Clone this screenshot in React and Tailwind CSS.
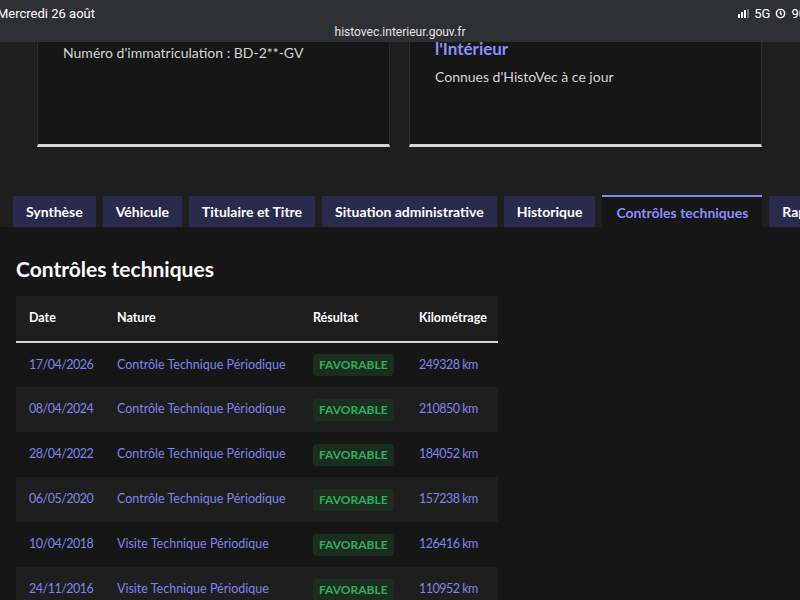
const tabs = ['Synthèse', 'Véhicule', 'Titulaire et Titre', 'Situation administrative', 'Historique', 'Contrôles techniques', 'Rapport']

const rows = [
  { date: '17/04/2026', nature: 'Contrôle Technique Périodique', km: '249328 km' },
  { date: '08/04/2024', nature: 'Contrôle Technique Périodique', km: '210850 km' },
  { date: '28/04/2022', nature: 'Contrôle Technique Périodique', km: '184052 km' },
  { date: '06/05/2020', nature: 'Contrôle Technique Périodique', km: '157238 km' },
  { date: '10/04/2018', nature: 'Visite Technique Périodique', km: '126416 km' },
  { date: '24/11/2016', nature: 'Visite Technique Périodique', km: '110952 km' },
]

function StatusBar() {
  return (
    <div className="h-[42px] bg-[#2f3033] relative shrink-0" style={{ fontFamily: 'Roboto, "Liberation Sans", sans-serif' }}>
      <div className="absolute left-[-3px] top-[4px] text-[13px] text-white">Mercredi 26 août</div>
      <div className="absolute right-[-6px] top-[4px] flex items-center gap-[5px] text-[13px] text-white">
        <div className="flex items-end gap-[1px] h-[9px]">
          <span className="w-[2px] h-[4px] bg-white" />
          <span className="w-[2px] h-[6px] bg-white" />
          <span className="w-[2px] h-[8px] bg-white" />
          <span className="w-[2px] h-[9px] bg-[#777]" />
        </div>
        <span>5G</span>
        <svg width="11" height="11" viewBox="0 0 12 12" fill="none" stroke="white" strokeWidth="1.6">
          <circle cx="6" cy="6" r="4.5" />
          <path d="M6 3.5v2.7l1.5 1" />
        </svg>
        <span>90</span>
      </div>
      <div className="absolute inset-x-0 top-[23px] text-center text-[12px] text-[#e4e4e4]">histovec.interieur.gouv.fr</div>
    </div>
  )
}

export default function App() {
  return (
    <div className="w-[800px] h-[600px] overflow-hidden bg-[#1e1e1e] flex flex-col" style={{ fontFamily: 'Lato, "Noto Sans", sans-serif' }}>
      <StatusBar />

      <div className="flex gap-[19px] pl-[37px] pr-[37px] h-[106px] shrink-0">
        <div className="w-[353px] h-[105px] bg-[#161616] border-x border-[#2c2c2c] border-b-[3px] border-b-[#d6d6d6] px-[25px]">
          <div className="text-[14px] text-[#d4d4d4]">Numéro d'immatriculation : BD-2**-GV</div>
        </div>
        <div className="w-[353px] h-[105px] bg-[#161616] border-x border-[#2c2c2c] border-b-[3px] border-b-[#d6d6d6] px-[25px]">
          <div className="text-[17px] font-bold text-[#8d8dff] leading-[20px] -mt-[3px]">l'Intérieur</div>
          <div className="text-[14px] text-[#d4d4d4] mt-[7px]">Connues d'HistoVec à ce jour</div>
        </div>
      </div>

      <div className="flex gap-[7px] pl-[13px] mt-[47px] shrink-0 whitespace-nowrap">
        {tabs.map((t) => {
          const active = t === 'Contrôles techniques'
          return (
            <div
              key={t}
              className={active
                ? 'h-[32px] px-[14px] flex items-center bg-[#161616] border-t-2 border-[#8585f6] text-[#8d8dff] text-[14px] font-bold'
                : 'h-[31px] mt-[1px] px-[13px] flex items-center bg-[#2a2a4c] text-white text-[14px] font-bold shadow-[0_2px_0_#111]'}
            >
              {t}
            </div>
          )
        })}
      </div>

      <div className="flex-1 bg-[#161616] px-[16px] pt-[30px]">
        <h2 className="text-[21px] font-bold text-white leading-[24px]">Contrôles techniques</h2>
        <table className="mt-[15px] w-[482px] text-left border-collapse text-[12.5px]">
          <thead>
            <tr className="bg-[#1e1e1e] h-[46px] border-b-2 border-[#d6d6d6]">
              <th className="w-[88px] pl-[13px] font-bold text-white">Date</th>
              <th className="w-[196px] pl-[13px] font-bold text-white">Nature</th>
              <th className="w-[106px] pl-[13px] font-bold text-white">Résultat</th>
              <th className="pl-[13px] font-bold text-white">Kilométrage</th>
            </tr>
          </thead>
          <tbody>
            {rows.map((r, i) => (
              <tr key={r.date} className={i % 2 === 0 ? 'h-[45px] bg-[#161616]' : 'h-[45px] bg-[#1e1e1e]'}>
                <td className="pl-[13px] text-[#8282ea] tracking-[-0.5px]">{r.date}</td>
                <td className="pl-[13px] text-[#8282ea]">{r.nature}</td>
                <td className="pl-[13px]">
                  <span className="inline-block px-[6px] py-[2px] rounded-[4px] bg-[#1b2d1f] text-[#2fad5c] text-[12px] font-bold">FAVORABLE</span>
                </td>
                <td className="pl-[13px] text-[#8282ea] tracking-[-0.5px]">{r.km}</td>
              </tr>
            ))}
          </tbody>
        </table>
      </div>
    </div>
  )
}
